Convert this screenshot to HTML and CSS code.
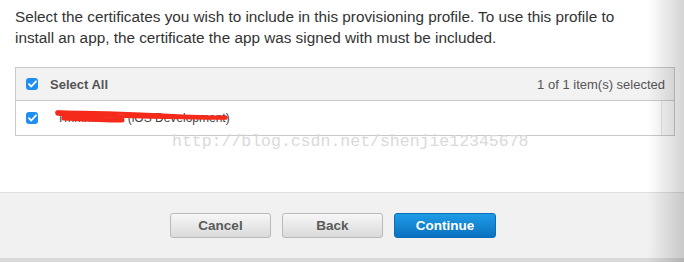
FILE: index.html
```html
<!DOCTYPE html>
<html lang="en">
  <head>
    <meta charset="utf-8" />
    <title>Select Certificates</title>
    <link rel="stylesheet" href="styles.css">
  </head>
  <body>
    <div class="page">
      <div class="page-body">
        <p class="intro">
          Select the certificates you wish to include in this provisioning profile. To use this profile to
          install an app, the certificate the app was signed with must be included.
        </p>

        <!--Certificate list-->
        <div class="cert-table">
          <div class="cert-head">
            <span class="check"><svg width="9" height="8" viewBox="0 0 9 8"><path d="M1 4.2l2.3 2.3L8 1.3" fill="none" stroke="#fff" stroke-width="1.8" stroke-linecap="round" stroke-linejoin="round"/></svg></span>
            <span class="head-label">Select All</span>
            <span class="head-count">1 of 1 item(s) selected</span>
          </div>
          <div class="cert-row">
            <span class="check"><svg width="9" height="8" viewBox="0 0 9 8"><path d="M1 4.2l2.3 2.3L8 1.3" fill="none" stroke="#fff" stroke-width="1.8" stroke-linecap="round" stroke-linejoin="round"/></svg></span>
            <span class="row-label">
              Tmmmmmm (iOS Development)
              <svg class="scribble" width="180" height="20" viewBox="0 0 180 20">
                <path d="M3 5 C 30 5, 70 6, 110 8 S 160 10, 172 10" fill="none" stroke="#f52a1b" stroke-width="3" stroke-linecap="round"/>
                <path d="M4 6 C 25 7, 45 8, 62 8" fill="none" stroke="#f52a1b" stroke-width="5.5" stroke-linecap="round"/>
                <path d="M10 11 C 30 12, 50 13, 68 13" fill="none" stroke="#f52a1b" stroke-width="5" stroke-linecap="round"/>
                <path d="M60 9 C 100 10, 140 11, 172 11" fill="none" stroke="#f52a1b" stroke-width="3.5" stroke-linecap="round"/>
              </svg>
            </span>
            <span class="row-scroll"></span>
          </div>
        </div>
      </div>

      <!--Footer-->
      <div class="footer">
        <button class="btn" type="button">Cancel</button>
        <button class="btn" type="button">Back</button>
        <button class="btn btn-primary" type="button">Continue</button>
      </div>
      <div class="footer-edge"></div>

      <div class="watermark">http://blog.csdn.net/shenjie12345678</div>
      <div class="edge-shadow"></div>
    </div>
  </body>
</html>
```

FILE: styles.css
```css
body {
  margin: 0;
  background: #ffffff;
  font-family: "Liberation Sans", Arial, sans-serif;
  color: #333333;
}
.page {
  position: relative;
  width: 684px;
  height: 262px;
  overflow: hidden;
}
.page-body {
  height: 192px;
  padding: 6px 9px 0 15px;
  box-sizing: border-box;
  background: #ffffff;
}
.intro {
  margin: 0 0 19px 0;
  font-size: 15.3px;
  line-height: 21px;
  color: #333333;
  width: 640px;
}
.cert-table {
  border: 1px solid #c9c9c9;
  width: 658px;
}
.cert-head {
  display: flex;
  align-items: center;
  height: 32px;
  background: #f2f2f2;
  border-bottom: 1px solid #c9c9c9;
  padding: 0 9px 0 10px;
}
.check {
  display: flex;
  align-items: center;
  justify-content: center;
  width: 12px;
  height: 12px;
  border-radius: 3px;
  background: #1f8ef1;
  flex-shrink: 0;
}
.head-label {
  margin-left: 12px;
  font-size: 13px;
  font-weight: 700;
  color: #555555;
}
.head-count {
  margin-left: auto;
  font-size: 13px;
  color: #555555;
}
.cert-row {
  display: flex;
  align-items: center;
  height: 34px;
  padding-left: 10px;
}
.row-label {
  position: relative;
  margin-left: 19px;
  font-size: 12px;
  color: #444444;
}
.scribble {
  position: absolute;
  left: -3px;
  top: -4px;
}
.row-scroll {
  margin-left: auto;
  align-self: stretch;
  width: 12px;
  background: #f9f9f9;
  border-left: 1px solid #e3e3e3;
}
.footer {
  display: flex;
  gap: 11px;
  height: 66px;
  padding: 20px 0 0 170px;
  box-sizing: border-box;
  background: #f1f1f1;
  border-top: 1px solid #dedede;
}
.footer-edge {
  height: 4px;
  background: #d9d9d9;
}
.btn {
  width: 101px;
  height: 25px;
  border: 1px solid #b9b9b9;
  border-radius: 3px;
  background: linear-gradient(#f7f7f7, #dadada);
  font-family: "Liberation Sans", Arial, sans-serif;
  font-size: 13.5px;
  font-weight: 700;
  color: #5a5a5a;
  padding: 0;
}
.btn-primary {
  border-color: #0b6db9;
  background: linear-gradient(#1f9ce6, #0a70c0);
  color: #ffffff;
  width: 102px;
}
.watermark {
  position: absolute;
  left: 172px;
  top: 132px;
  font-family: "Liberation Mono", "Courier New", monospace;
  font-size: 16.5px;
  color: #dadada;
  pointer-events: none;
}
.edge-shadow {
  position: absolute;
  top: 0;
  right: 0;
  width: 36px;
  height: 100%;
  background: linear-gradient(to right, rgba(0, 0, 0, 0), rgba(0, 0, 0, 0.17));
  pointer-events: none;
}
```
